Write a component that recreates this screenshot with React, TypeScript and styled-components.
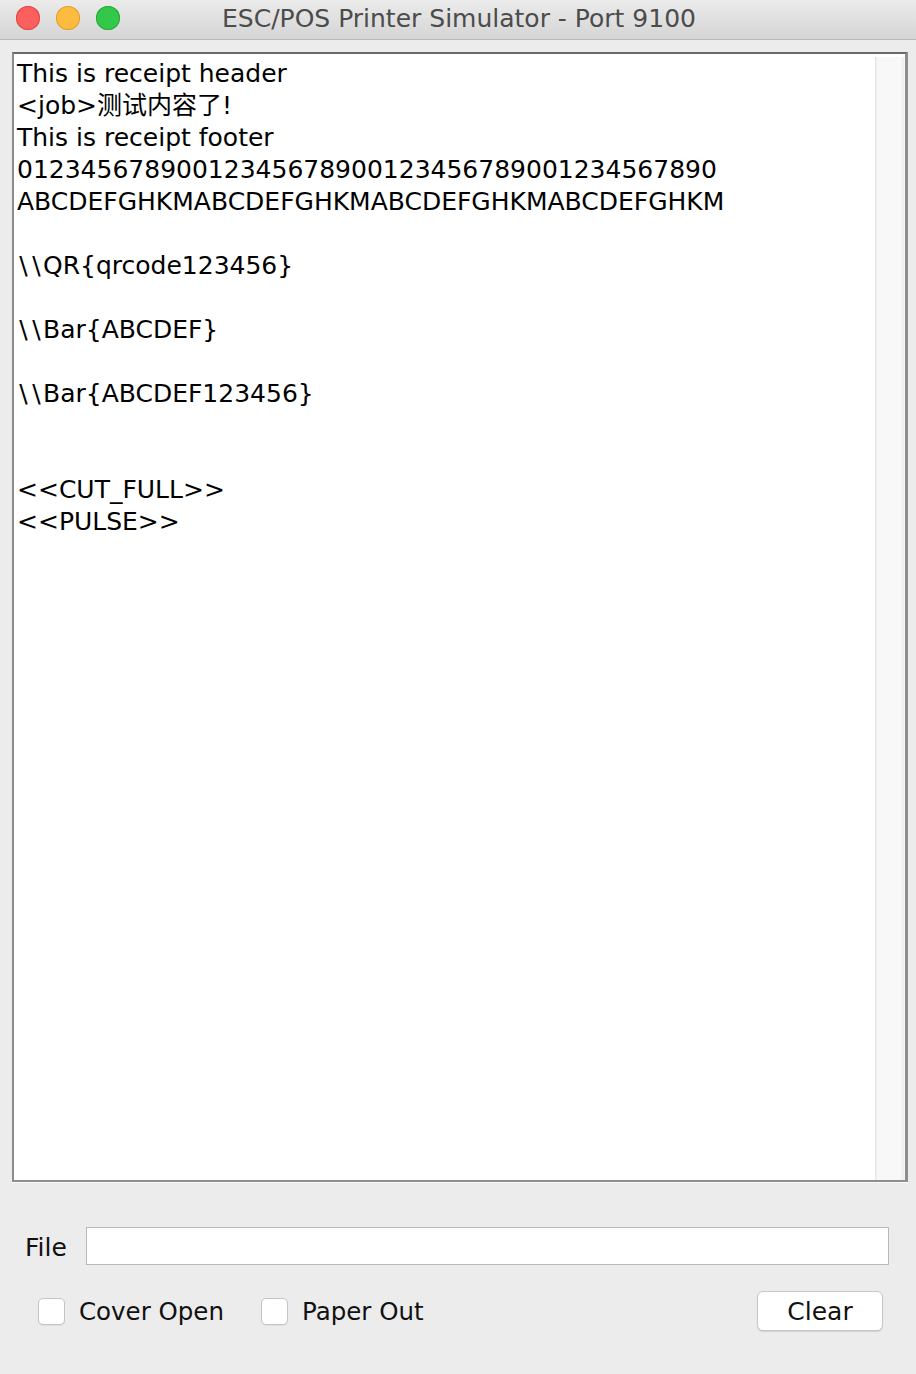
import React from "react";
import styled, { createGlobalStyle } from "styled-components";

const GlobalStyle = createGlobalStyle`
  html, body {
    margin: 0;
    padding: 0;
    background: #ececec;
  }
  body {
    font-family: "DejaVu Sans", "Noto Sans CJK SC", sans-serif;
  }
`;

const lines = [
  "This is receipt header",
  "<job>测试内容了!",
  "This is receipt footer",
  "01234567890012345678900123456789001234567890",
  "ABCDEFGHKMABCDEFGHKMABCDEFGHKMABCDEFGHKM",
  "",
  "\\\\QR{qrcode123456}",
  "",
  "\\\\Bar{ABCDEF}",
  "",
  "\\\\Bar{ABCDEF123456}",
  "",
  "",
  "<<CUT_FULL>>",
  "<<PULSE>>",
];

// backslashes are wider in the original font, so give them a little air
const renderLine = (line: string) => {
  if (!line) return "\u00a0";
  const m = line.match(/^(\\+)(.*)$/);
  if (!m) return line;
  return (
    <>
      {m[1].split("").map((c, i) => (
        <Slash key={i}>{c}</Slash>
      ))}
      {m[2]}
    </>
  );
};

const App = () => {
  return (
    <>
      <GlobalStyle />
      <Window>
        <TitleBar>
          <Lights>
            <Light color="#fc605c" edge="#de4a46" />
            <Light color="#fdbc40" edge="#dea032" />
            <Light color="#34c84a" edge="#27a935" />
          </Lights>
          <Title>ESC/POS Printer Simulator - Port 9100</Title>
        </TitleBar>
        <Body>
          <OutputPane>
            <OutputText>
              {lines.map((line, i) => (
                <Line key={i}>{renderLine(line)}</Line>
              ))}
            </OutputText>
            <ScrollTrack />
          </OutputPane>
          <Controls>
            <FileRow>
              <Label>File</Label>
              <FileInput />
            </FileRow>
            <OptionRow>
              <Check>
                <Box />
                Cover Open
              </Check>
              <Check>
                <Box />
                Paper Out
              </Check>
              <ClearButton>Clear</ClearButton>
            </OptionRow>
          </Controls>
        </Body>
      </Window>
    </>
  );
};

const Window = styled.div`
  width: 916px;
  height: 1374px;
  display: flex;
  flex-direction: column;
  background: #ececec;
`;

const TitleBar = styled.div`
  height: 39px;
  flex: none;
  display: flex;
  align-items: center;
  justify-content: center;
  position: relative;
  background: linear-gradient(#ebebeb, #d5d5d5);
  border-bottom: 1px solid #b9b9b9;
`;

const Lights = styled.div`
  position: absolute;
  left: 16px;
  top: 6px;
  display: flex;
  gap: 16px;
`;

const Light = styled.div<{ color: string; edge: string }>`
  width: 24px;
  height: 24px;
  border-radius: 50%;
  background: ${(p) => p.color};
  box-shadow: inset 0 0 0 1px ${(p) => p.edge};
`;

const Title = styled.div`
  font-size: 25px;
  color: #4c4c4c;
  margin-left: 2px;
  margin-top: -2px;
`;

const Body = styled.div`
  flex: 1;
  display: flex;
  flex-direction: column;
  padding: 12px 8px 0 12px;
`;

const OutputPane = styled.div`
  height: 1126px;
  display: flex;
  background: #fff;
  border-top: 2px solid #6b6b6b;
  border-left: 2px solid #8c8c8c;
  border-right: 3px solid #8e8e8e;
  border-bottom: 2px solid #8e8e8e;
  box-shadow: 0 1px 0 #fafafa;
`;

const OutputText = styled.div`
  flex: 1;
  padding: 4px 0 0 3px;
  font-size: 25px;
  line-height: 32px;
  color: #000;
  white-space: pre;
  overflow: hidden;
`;

const Line = styled.div`
  height: 32px;
`;

const Slash = styled.span`
  display: inline-block;
  width: 13px;
  text-align: center;
`;

const ScrollTrack = styled.div`
  width: 30px;
  margin: 3px 0 0;
  background: linear-gradient(90deg, #e6e6e6 0, #e6e6e6 1px, #f8f8f8 2px, #f8f8f8 26px, #ececec 28px, #fafafa 30px);
`;

const Controls = styled.div`
  display: flex;
  flex-direction: column;
  padding: 45px 19px 0 13px;
`;

const FileRow = styled.div`
  display: flex;
  align-items: center;
  gap: 19px;
`;

const Label = styled.div`
  font-size: 25px;
  color: #111;
  padding-top: 2px;
`;

const FileInput = styled.div`
  flex: 1;
  height: 36px;
  background: #fff;
  border: 1px solid #b9b9b9;
`;

const OptionRow = styled.div`
  display: flex;
  align-items: center;
  gap: 37px;
  margin-top: 26px;
  padding-left: 13px;
`;

const Check = styled.div`
  display: flex;
  align-items: center;
  gap: 14px;
  font-size: 24.5px;
  color: #111;
`;

const Box = styled.div`
  width: 27px;
  height: 27px;
  box-sizing: border-box;
  border: 1px solid #c4c4c4;
  border-radius: 5px;
  background: #fff;
  box-shadow: 0 1px 1px rgba(0, 0, 0, 0.06);
`;

const ClearButton = styled.div`
  margin-left: auto;
  margin-right: 6px;
  width: 126px;
  height: 40px;
  box-sizing: border-box;
  display: flex;
  align-items: center;
  justify-content: center;
  font-size: 25px;
  color: #111;
  background: #fff;
  border: 1px solid #c8c8c8;
  border-radius: 6px;
  box-shadow: 0 1px 1px rgba(0, 0, 0, 0.12);
`;

export default App;
